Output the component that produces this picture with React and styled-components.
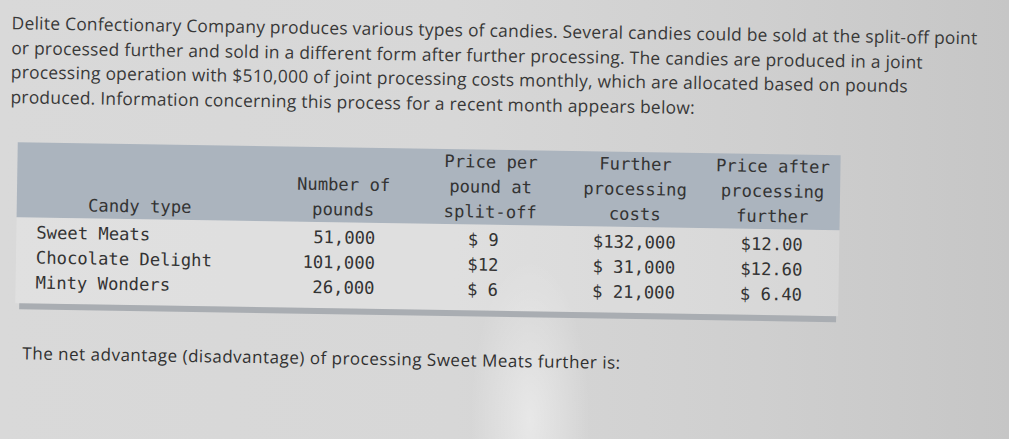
import React from 'react';
import styled, { createGlobalStyle } from 'styled-components';

const GlobalStyle = createGlobalStyle`
  html, body {
    margin: 0;
    padding: 0;
    height: 100%;
    overflow: hidden;
  }
  body {
    background:
      radial-gradient(ellipse 60px 160px at 530px 420px, rgba(255,255,255,0.45), rgba(255,255,255,0) 100%),
      linear-gradient(to right, #d9d9d9 0%, #d7d7d7 45%, #cfcfcf 75%, #c6c6c6 100%);
  }
`;

const COLS = '246px 137px 165px 140px 135px';

const Page = styled.div`
  width: 1009px;
  height: 439px;
  overflow: hidden;
`;

// the reference is a photo of a screen, so the whole sheet tilts a little
const Sheet = styled.div`
  display: flex;
  flex-direction: column;
  padding: 10px 0 0 12px;
  transform: rotate(0.9deg);
  transform-origin: 0 0;
`;

const Intro = styled.p`
  margin: 0;
  font-family: "Open Sans", "Liberation Sans", sans-serif;
  font-size: 17.4px;
  letter-spacing: 0.25px;
  line-height: 24.5px;
  color: #383838;
  white-space: nowrap;
`;

const Line = styled.span`
  display: block;
`;

const Table = styled.div`
  display: flex;
  flex-direction: column;
  width: 823px;
  margin: 34px 0 0 8px;
  font-family: "DejaVu Sans Mono", "Liberation Mono", monospace;
  font-size: 17.2px;
  color: #333;
`;

const HeadRow = styled.div`
  display: grid;
  grid-template-columns: ${COLS};
  background: #abb4be;
  line-height: 25px;
`;

const HeadCell = styled.div`
  display: flex;
  flex-direction: column;
  justify-content: flex-end;
  text-align: center;
  padding-left: ${p => p.$pl || 0}px;
`;

const Body = styled.div`
  display: flex;
  flex-direction: column;
  background: rgba(255, 255, 255, 0.2);
  padding: 3px 0 8px;
`;

const Row = styled.div`
  display: grid;
  grid-template-columns: ${COLS};
  line-height: 25px;
`;

const Cell = styled.div`
  text-align: ${p => p.$align || 'center'};
  padding-left: ${p => p.$pl || 0}px;
  padding-right: ${p => p.$pr || 0}px;
  white-space: pre;
`;

const BottomBar = styled.div`
  height: 6px;
  margin: 0 2px 0 4px;
  background: #a9adb2;
`;

const Question = styled.p`
  margin: 32px 0 0 16px;
  font-family: "Open Sans", "Liberation Sans", sans-serif;
  font-size: 17px;
  letter-spacing: 0.5px;
  color: #303030;
`;

const rows = [
  ['Sweet Meats', '51,000', '$ 9', '$132,000', '$12.00'],
  ['Chocolate Delight', '101,000', '$12', '$ 31,000', '$12.60'],
  ['Minty Wonders', '26,000', '$ 6', '$ 21,000', '$ 6.40'],
];

function App() {
  return (
    <Page>
      <GlobalStyle />
      <Sheet>
        <Intro>
          <Line>Delite Confectionary Company produces various types of candies. Several candies could be sold at the split-off point</Line>
          <Line>or processed further and sold in a different form after further processing. The candies are produced in a joint</Line>
          <Line>processing operation with $510,000 of joint processing costs monthly, which are allocated based on pounds</Line>
          <Line>produced. Information concerning this process for a recent month appears below:</Line>
        </Intro>

        <Table>
          <HeadRow>
            <HeadCell>Candy type</HeadCell>
            <HeadCell $pl={24}>
              <span>Number of</span>
              <span>pounds</span>
            </HeadCell>
            <HeadCell $pl={16}>
              <span>Price per</span>
              <span>pound at</span>
              <span>split-off</span>
            </HeadCell>
            <HeadCell>
              <span>Further</span>
              <span>processing</span>
              <span>costs</span>
            </HeadCell>
            <HeadCell>
              <span>Price after</span>
              <span>processing</span>
              <span>further</span>
            </HeadCell>
          </HeadRow>
          <Body>
            {rows.map(r => (
              <Row key={r[0]}>
                <Cell $align="left" $pl={20}>{r[0]}</Cell>
                <Cell $align="right" $pr={24}>{r[1]}</Cell>
                <Cell $pl={3}>{r[2]}</Cell>
                <Cell>{r[3]}</Cell>
                <Cell>{r[4]}</Cell>
              </Row>
            ))}
          </Body>
          <BottomBar />
        </Table>

        <Question>The net advantage (disadvantage) of processing Sweet Meats further is:</Question>
      </Sheet>
    </Page>
  );
}

export default App;
